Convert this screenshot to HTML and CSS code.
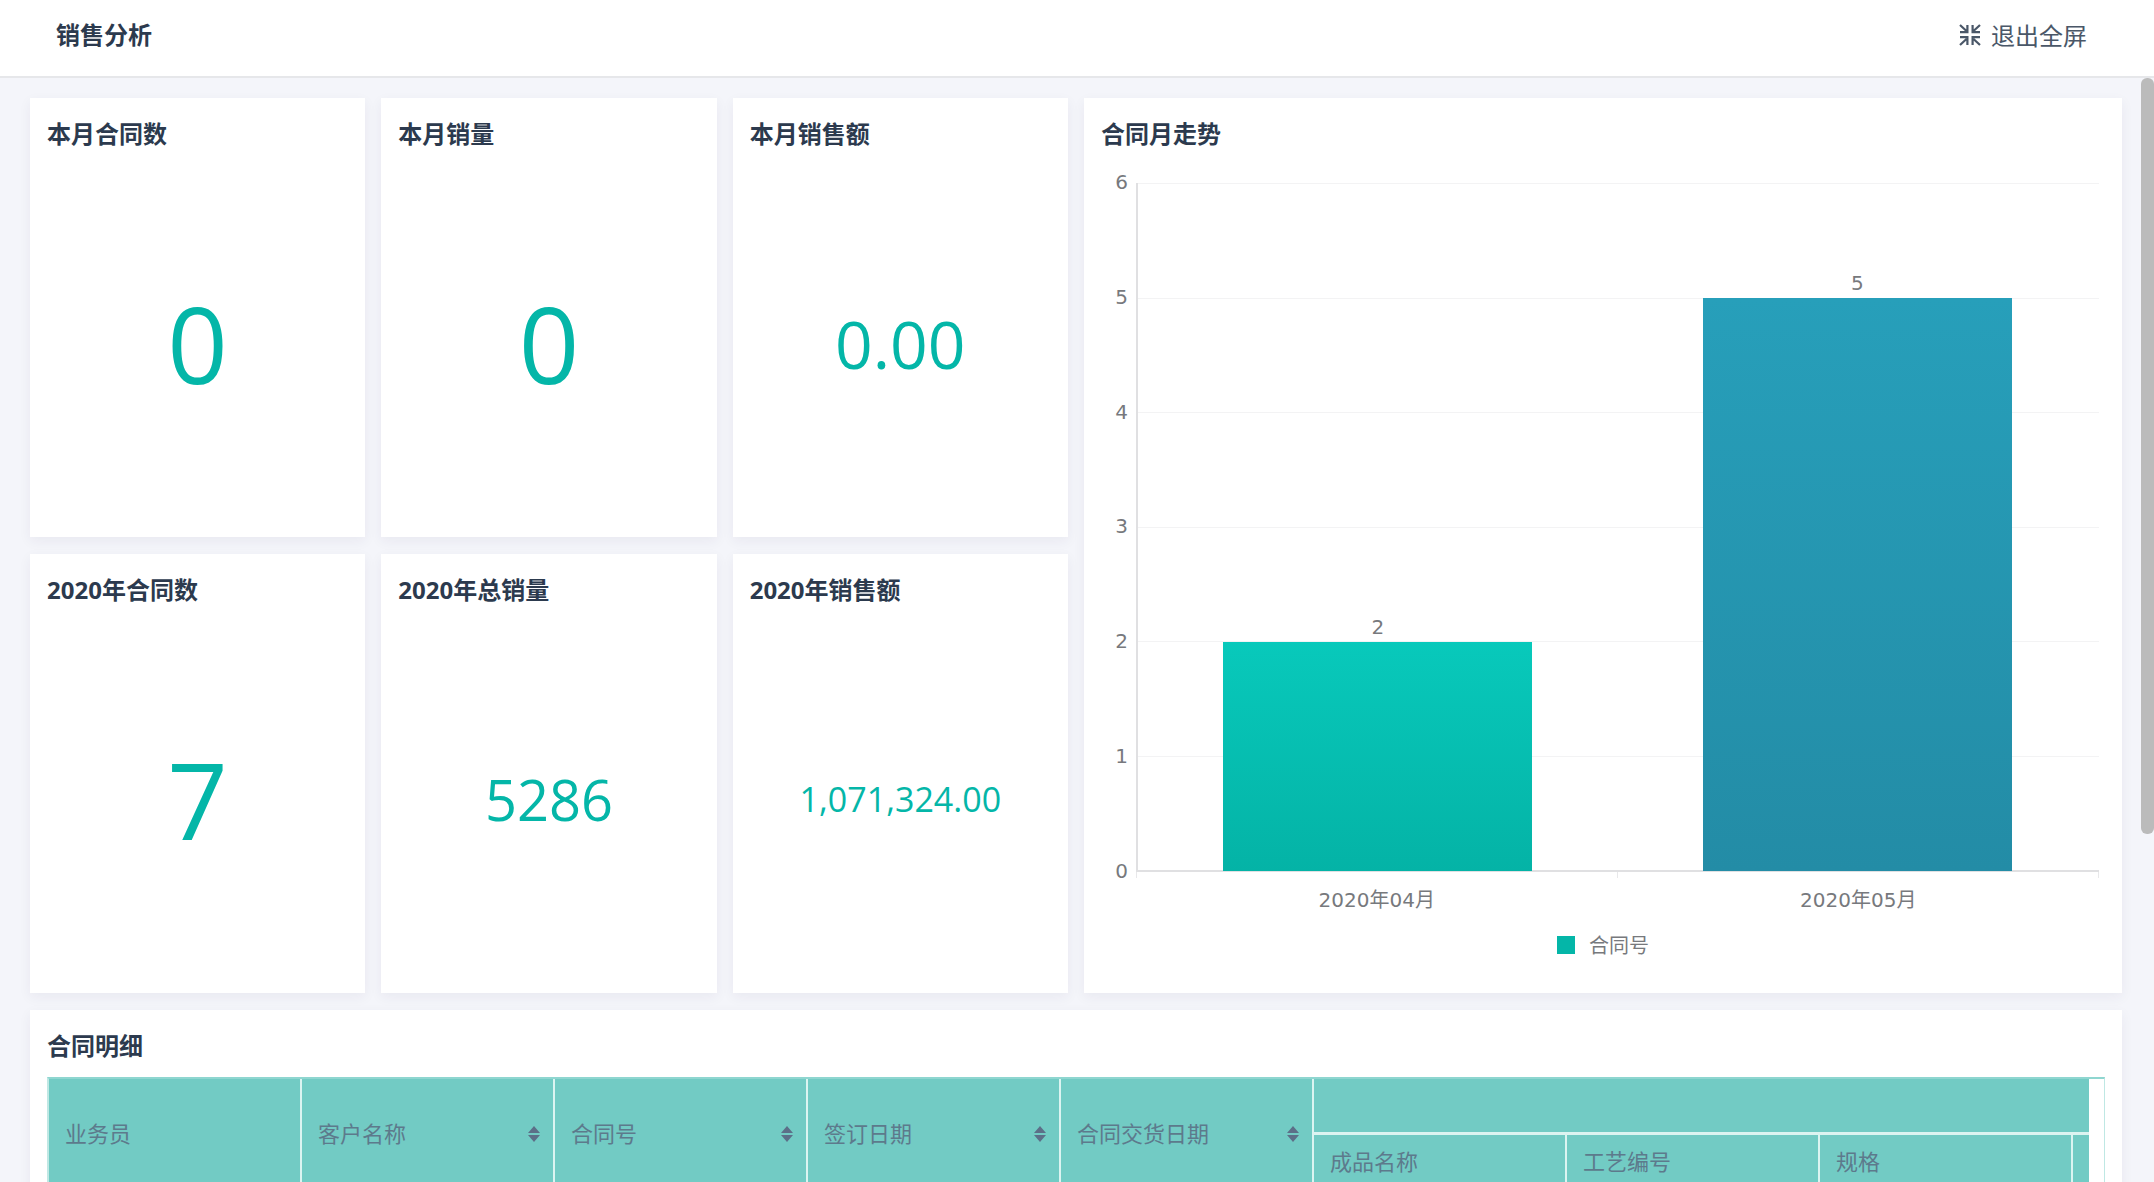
FILE: index.html
```html
<!DOCTYPE html>
<html lang="zh-CN">
<head>
<meta charset="utf-8">
<meta name="viewport" content="width=device-width, initial-scale=1">
<title>销售分析</title>
<link rel="stylesheet" href="styles.css">
</head>
<body>
<header class="topbar">
  <h1 class="topbar-title">销售分析</h1>
  <button class="exit-button" type="button">
    <svg class="exit-icon" viewBox="0 0 22 22" aria-hidden="true">
      <g fill="none" stroke="currentColor" stroke-width="2.200">
        <path d="M1 1l6.500 6M1 8.200h7.400V1"/>
        <path d="M21 1l-6.500 6M21 8.200h-7.400V1"/>
        <path d="M1 21l6.500-6M1 13.200h7.400V21"/>
        <path d="M21 21l-6.500-6M21 13.200h-7.400V21"/>
      </g>
    </svg>
    <span>退出全屏</span>
  </button>
</header>
<div class="viewport">
  <main class="dashboard">
    <section class="card">
      <h2 class="card-title">本月合同数</h2>
      <p class="metric metric-xl">0</p>
    </section>
    <section class="card">
      <h2 class="card-title">本月销量</h2>
      <p class="metric metric-xl">0</p>
    </section>
    <section class="card">
      <h2 class="card-title">本月销售额</h2>
      <p class="metric metric-lg">0.00</p>
    </section>
    <section class="card card-chart">
      <h2 class="card-title">合同月走势</h2>
      <div class="chart">
        <div class="y-axis">
          <span>6</span><span>5</span><span>4</span><span>3</span><span>2</span><span>1</span><span>0</span>
        </div>
        <div class="plot">
          <div class="gridlines"><i></i><i></i><i></i><i></i><i></i><i></i></div>
          <div class="bars">
            <div class="slot">
              <span class="bar-value">2</span>
              <div class="bar bar-teal" style="--value: 2"></div>
            </div>
            <div class="slot">
              <span class="bar-value">5</span>
              <div class="bar bar-blue" style="--value: 5"></div>
            </div>
          </div>
        </div>
        <div class="x-axis">
          <div class="ticks"><i></i><i></i></div>
          <div class="tick-labels"><span>2020年04月</span><span>2020年05月</span></div>
        </div>
      </div>
      <div class="legend"><i class="legend-mark"></i>合同号</div>
    </section>
    <section class="card">
      <h2 class="card-title">2020年合同数</h2>
      <p class="metric metric-xl">7</p>
    </section>
    <section class="card">
      <h2 class="card-title">2020年总销量</h2>
      <p class="metric metric-md">5286</p>
    </section>
    <section class="card">
      <h2 class="card-title">2020年销售额</h2>
      <p class="metric metric-sm">1,071,324.00</p>
    </section>
    <section class="card card-table">
      <h2 class="card-title">合同明细</h2>
      <div class="table-frame">
        <div class="table-scroll">
          <table class="detail">
            <thead>
              <tr class="header-row">
                <th rowspan="2" scope="col">业务员</th>
                <th rowspan="2" scope="col"><div class="sortable">客户名称<button class="sort" type="button" aria-label="排序"><svg viewBox="0 0 12 16"><path d="M6 0l6 7H0zM6 16l6-7H0z"/></svg></button></div></th>
                <th rowspan="2" scope="col"><div class="sortable">合同号<button class="sort" type="button" aria-label="排序"><svg viewBox="0 0 12 16"><path d="M6 0l6 7H0zM6 16l6-7H0z"/></svg></button></div></th>
                <th rowspan="2" scope="col"><div class="sortable">签订日期<button class="sort" type="button" aria-label="排序"><svg viewBox="0 0 12 16"><path d="M6 0l6 7H0zM6 16l6-7H0z"/></svg></button></div></th>
                <th rowspan="2" scope="col"><div class="sortable">合同交货日期<button class="sort" type="button" aria-label="排序"><svg viewBox="0 0 12 16"><path d="M6 0l6 7H0zM6 16l6-7H0z"/></svg></button></div></th>
                <th class="group" colspan="4" scope="colgroup"></th>
              </tr>
              <tr class="header-row">
                <th scope="col">成品名称</th>
                <th scope="col">工艺编号</th>
                <th scope="col">规格</th>
                <th scope="col"></th>
              </tr>
            </thead>
          </table>
        </div>
      </div>
    </section>
  </main>
  <div class="scroll-thumb"></div>
</div>
</body>
</html>
```
FILE: styles.css
```css
* {
  box-sizing: border-box;
}

body {
  margin: 0;
  height: 100vh;
  display: flex;
  flex-direction: column;
  overflow: hidden;
  background: #f4f5fa;
  color: #2c3a4e;
  font-family: "Open Sans", "Noto Sans CJK SC", sans-serif;
}

h1,
h2,
p {
  margin: 0;
}

/* Top bar */

.topbar {
  flex: none;
  display: flex;
  align-items: center;
  justify-content: space-between;
  height: 78px;
  padding: 0 67px 6px 56px;
  background: #fff;
  border-bottom: 2px solid #e6e7ea;
}

.topbar-title {
  font-size: 24px;
  line-height: 32px;
}

.exit-button {
  display: flex;
  align-items: center;
  gap: 10px;
  padding: 0;
  border: 0;
  background: none;
  color: #4a5768;
  font: 24px/32px "Noto Sans CJK SC", sans-serif;
}

.exit-icon {
  width: 22px;
  height: 22px;
}

/* Dashboard grid */

.viewport {
  position: relative;
  flex: 1;
  min-height: 0;
  overflow: hidden;
}

.dashboard {
  display: grid;
  grid-template-columns: repeat(6, 1fr);
  grid-auto-rows: minmax(439px, auto);
  gap: 17px 16px;
  padding: 20px 32px 20px 30px;
}

.scroll-thumb {
  position: absolute;
  top: 0;
  right: 0;
  width: 13px;
  height: 756px;
  border-radius: 6px;
  background: #bbb;
}

.card {
  display: flex;
  flex-direction: column;
  min-width: 0;
  background: #fff;
  box-shadow: 0 4px 12px rgba(50, 30, 80, 0.06);
}

.card-chart {
  grid-column: 4 / span 3;
  grid-row: 1 / span 2;
}

.card-table {
  grid-column: 1 / -1;
}

.card-title {
  padding: 19px 17px 1px;
  font-size: 24px;
  line-height: 33px;
}

.metric {
  flex: 1;
  display: flex;
  align-items: center;
  justify-content: center;
  padding-bottom: 3px;
  color: #04b6a8;
  line-height: 1;
}

.metric-xl { font-size: 106px; }
.metric-lg { font-size: 66px; }
.metric-md { font-size: 56px; }
.metric-sm { font-size: 34px; }

/* Bar chart */

.chart {
  flex: 1;
  display: grid;
  grid-template: 1fr 58px / 44px 1fr;
  padding: 32px 23px 0 0;
  color: #77797d;
  font: 20px/30px "DejaVu Sans", "Noto Sans CJK SC", sans-serif;
}

.y-axis {
  display: flex;
  flex-direction: column;
  justify-content: space-between;
  text-align: right;
  line-height: 20px;
}

.y-axis span {
  margin: -11px 0 -9px;
}

.plot {
  display: grid;
  margin-left: 8px;
  border-left: 2px solid #e0e0e2;
}

.gridlines,
.bars {
  grid-area: 1 / 1;
}

.gridlines {
  display: grid;
  grid-template-rows: repeat(6, 1fr);
  border-bottom: 2px solid #e0e0e2;
}

.gridlines i {
  border-top: 1px solid #f3f3f4;
}

.bars {
  display: grid;
  grid-template-columns: 1fr 1fr;
  padding: 0 2px 1px 0;
}

.slot {
  display: flex;
  flex-direction: column;
  justify-content: flex-end;
  align-items: center;
}

.bar {
  flex: none;
  width: calc(100% * 40 / 62);
  height: calc(100% * var(--value) / 6);
}

.bar-teal {
  background: linear-gradient(#08c9bb, #04b3a6);
}

.bar-blue {
  background: linear-gradient(#279fba, #238ca6);
}

.x-axis {
  grid-column: 2;
  margin-left: 8px;
}

.ticks,
.tick-labels {
  display: grid;
  grid-template-columns: 1fr 1fr;
  text-align: center;
}

.ticks {
  height: 6px;
  margin-bottom: 7px;
  border-right: 1px solid #e8e8ea;
}

.ticks i {
  border-left: 1px solid #e8e8ea;
}

.legend {
  display: flex;
  align-items: center;
  justify-content: center;
  gap: 14px;
  padding-bottom: 33px;
  color: #77797d;
  font: 20px/30px "Noto Sans CJK SC", sans-serif;
}

.legend-mark {
  width: 18px;
  height: 18px;
  background: #04b6a8;
}

/* Detail table */

.table-frame {
  margin: 14px 17px 17px;
  padding-right: 15px;
  border: solid #bfe8e4;
  border-width: 2px 1px 1px 2px;
  border-top-color: #8fd6d0;
}

.table-scroll {
  overflow: hidden;
}

.detail {
  width: 2277px;
  table-layout: fixed;
  border-collapse: separate;
  border-spacing: 0;
}

.header-row {
  height: 56px;
}

.detail th {
  padding: 0 13px 5px 16px;
  background: #72cbc4;
  border-right: 2px solid #dcf4f1;
  border-bottom: 2px solid #dcf4f1;
  color: #5d7a8c;
  font: 22px/32px "Noto Sans CJK SC", sans-serif;
  text-align: left;
}

.detail .group {
  border-bottom-width: 3px;
}

.sortable {
  display: flex;
  align-items: center;
  justify-content: space-between;
}

.sort {
  display: flex;
  padding: 4px 0 0;
  border: 0;
  background: none;
  color: #5c6f88;
}

.sort svg {
  width: 12px;
  height: 16px;
  fill: currentColor;
}
```
